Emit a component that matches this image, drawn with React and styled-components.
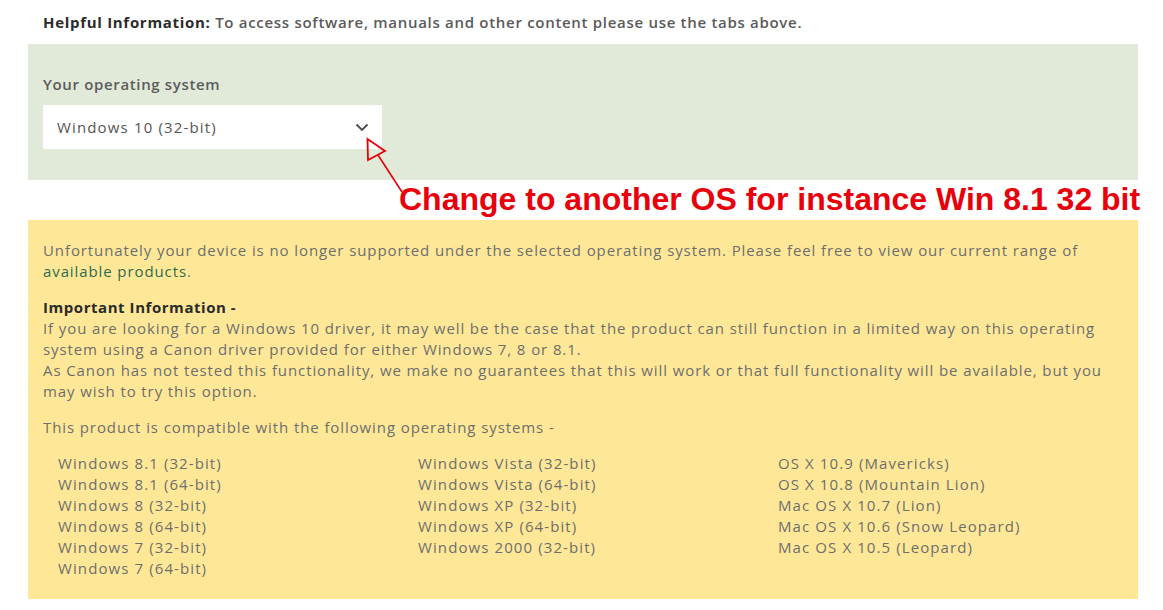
import React from "react";
import styled, { createGlobalStyle } from "styled-components";

const Global = createGlobalStyle`
  html, body { margin: 0; padding: 0; background: #ffffff; }
  body { font-family: "Open Sans", "Liberation Sans", sans-serif; }
`;

const Page = styled.div`
  position: relative;
  width: 1163px;
  height: 610px;
  padding: 0 25px 0 28px;
  box-sizing: border-box;
  overflow: hidden;
`;

const Helpful = styled.p`
  margin: 0;
  padding: 12px 0 0 15px;
  height: 44px;
  box-sizing: border-box;
  font-size: 15px;
  line-height: 21px;
  font-weight: 600;
  letter-spacing: 0.7px;
  color: #5a5a5a;
  white-space: nowrap;
  b { color: #2b2b2b; font-weight: 700; }
`;

const Panel = styled.section`
  background: ${(p) => p.$bg};
  padding: ${(p) => p.$pad};
  box-sizing: border-box;
`;

const Label = styled.div`
  font-size: 15px;
  line-height: 21px;
  font-weight: 600;
  letter-spacing: 0.65px;
  color: #5c5c5c;
  margin-bottom: 10px;
`;

const Select = styled.div`
  width: 339px;
  height: 44px;
  background: #ffffff;
  display: flex;
  align-items: center;
  justify-content: space-between;
  padding: 0 13px 0 14px;
  box-sizing: border-box;
  font-size: 15px;
  letter-spacing: 1.15px;
  color: #555;
`;

const Gap = styled.div`
  height: 40px;
`;

const Para = styled.p`
  margin: 0 0 ${(p) => p.$mb || 0}px;
  font-size: 15px;
  line-height: 21px;
  letter-spacing: 0.9px;
  color: #6e6e6e;
  strong { color: #2a2a2a; font-weight: 700; letter-spacing: 0.55px; }
  a { color: #2e6b4f; text-decoration: none; }
`;

const OsGrid = styled.div`
  display: grid;
  grid-template-columns: 360px 360px 360px;
  padding-left: 15px;
  margin-top: 15px;
`;

const OsCol = styled.ul`
  list-style: none;
  margin: 0;
  padding: 0;
`;

const OsItem = styled.li`
  font-size: 15px;
  line-height: 21px;
  letter-spacing: 1.1px;
  color: #6e6e6e;
`;

const Annotation = styled.div`
  position: absolute;
  left: 0;
  top: 0;
  width: 1163px;
  height: 610px;
  pointer-events: none;
`;

const AnnoText = styled.div`
  position: absolute;
  left: 399px;
  top: 178px;
  font-family: "Liberation Sans", Arial, sans-serif;
  font-weight: 700;
  font-size: 32px;
  line-height: 42px;
  color: #e8000b;
  white-space: nowrap;
`;

const columns = [
  [
    "Windows 8.1 (32-bit)",
    "Windows 8.1 (64-bit)",
    "Windows 8 (32-bit)",
    "Windows 8 (64-bit)",
    "Windows 7 (32-bit)",
    "Windows 7 (64-bit)",
  ],
  [
    "Windows Vista (32-bit)",
    "Windows Vista (64-bit)",
    "Windows XP (32-bit)",
    "Windows XP (64-bit)",
    "Windows 2000 (32-bit)",
  ],
  [
    "OS X 10.9 (Mavericks)",
    "OS X 10.8 (Mountain Lion)",
    "Mac OS X 10.7 (Lion)",
    "Mac OS X 10.6 (Snow Leopard)",
    "Mac OS X 10.5 (Leopard)",
  ],
];

export default function App() {
  return (
    <>
      <Global />
      <Page>
        <Helpful>
          <b>Helpful Information:</b> To access software, manuals and other content please use the tabs above.
        </Helpful>
        <Panel $bg="#e1e9d8" $pad="30px 15px 31px">
          <Label>Your operating system</Label>
          <Select>
            <span>Windows 10 (32-bit)</span>
            <svg width="14" height="9" viewBox="0 0 14 9">
              <path d="M1.5 1.5 L7 7 L12.5 1.5" fill="none" stroke="#4a4a4a" strokeWidth="1.8" />
            </svg>
          </Select>
        </Panel>
        <Gap />
        <Panel $bg="#fee897" $pad="20px 15px 20px">
          <Para $mb={15}>
            Unfortunately your device is no longer supported under the selected operating system. Please feel free to view our current range of{" "}
            <a href="#">available products</a>.
          </Para>
          <Para $mb={15}>
            <strong>Important Information -</strong>
            <br />
            If you are looking for a Windows 10 driver, it may well be the case that the product can still function in a limited way on this operating system using a Canon driver provided for either Windows 7, 8 or 8.1.
            <br />
            As Canon has not tested this functionality, we make no guarantees that this will work or that full functionality will be available, but you may wish to try this option.
          </Para>
          <Para>This product is compatible with the following operating systems -</Para>
          <OsGrid>
            {columns.map((col, i) => (
              <OsCol key={i}>
                {col.map((os) => (
                  <OsItem key={os}>{os}</OsItem>
                ))}
              </OsCol>
            ))}
          </OsGrid>
        </Panel>
        <Annotation>
          <svg width="1163" height="610" viewBox="0 0 1163 610" style={{ position: "absolute", left: 0, top: 0 }}>
            <line x1="378" y1="155" x2="402" y2="192" stroke="#e8000b" strokeWidth="1.6" />
            <polygon points="367.5,139 368,160 385,151" fill="none" stroke="#e8000b" strokeWidth="1.8" />
          </svg>
          <AnnoText>Change to another OS for instance Win 8.1 32 bit</AnnoText>
        </Annotation>
      </Page>
    </>
  );
}
